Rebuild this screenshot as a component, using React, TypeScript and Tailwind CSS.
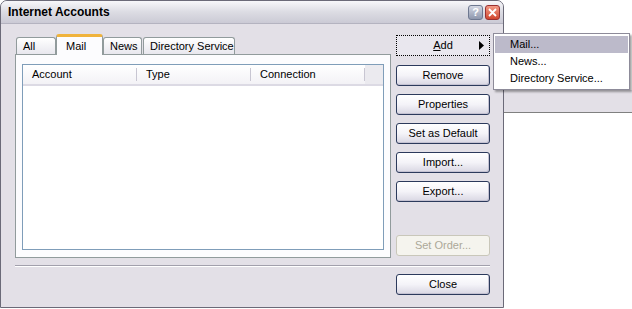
import React from 'react';

const FONT = "font-['Liberation_Sans',Arial,sans-serif]";

function XpButton({
  label,
  className = '',
  disabled = false,
}: {
  label: React.ReactNode;
  className?: string;
  disabled?: boolean;
}) {
  if (disabled) {
    return (
      <div
        className={`h-[21px] w-[94px] rounded-[3px] border border-[#c9c7ba] bg-[#f5f4ee] flex items-center justify-center text-[#aca899] ${className}`}
      >
        {label}
      </div>
    );
  }
  return (
    <div
      className={`h-[21px] w-[94px] rounded-[3px] border border-[#2c3a5c] bg-gradient-to-b from-white via-[#f4f3f8] to-[#d9d7e3] shadow-[inset_-1px_-1px_0_#c4c2d2] flex items-center justify-center text-black ${className}`}
    >
      {label}
    </div>
  );
}

function Tab({ label, active = false, width, className = '' }: { label: string; active?: boolean; width: number; className?: string }) {
  if (active) {
    return (
      <div
        className={`relative z-10 -mb-px h-[21px] rounded-t-[3px] border-x border-[#919b9c] bg-[#fcfcfe] border-t-[3px] border-t-[#f0b33c] flex items-start pt-[1px] pl-[9px] ${className}`}
        style={{ width }}
      >
        {label}
      </div>
    );
  }
  return (
    <div
      className={`h-[17px] rounded-t-[3px] border border-b-0 border-[#919b9c] bg-gradient-to-b from-white to-[#e8e7ee] flex items-center pl-[6px] ${className}`}
      style={{ width }}
    >
      {label}
    </div>
  );
}

export default function App() {
  return (
    <div className={`relative w-[632px] h-[309px] bg-white overflow-hidden text-[11px] ${FONT}`}>
      {/* window behind, peeking out on the right */}
      <div className="absolute left-[504px] top-[90px] w-[128px] h-[23px] bg-[#e3e0e7] border-b border-[#808080]" />

      {/* dialog */}
      <div className="relative w-[504px] h-[308px] rounded-t-[7px] border border-[#6b6a78] bg-[#e3e0e7] flex flex-col">
        <div className="h-[23px] rounded-t-[6px] bg-gradient-to-b from-[#f7f7fa] via-[#dcdce3] to-[#cbcad5] border-b border-[#b4b3c0] flex items-center pl-[7px] pr-[3px]">
          <span className="font-bold text-[12px] text-black">Internet Accounts</span>
          <div className="ml-auto flex gap-[2px]">
            <div className="w-[15px] h-[15px] rounded-[3px] border border-[#6e7890] bg-gradient-to-b from-[#d4d8e4] to-[#8e97ad] flex items-center justify-center text-white font-bold text-[11px] leading-none">
              ?
            </div>
            <div className="w-[15px] h-[15px] rounded-[3px] border border-[#9a3030] bg-gradient-to-b from-[#f29a86] to-[#d0442c] flex items-center justify-center">
              <svg width="9" height="9" viewBox="0 0 9 9">
                <path d="M1 1L8 8M8 1L1 8" stroke="white" strokeWidth="1.8" />
              </svg>
            </div>
          </div>
        </div>

        <div className="flex-1 pl-[14px] pr-[13px] pt-[10px] flex flex-col">
          <div className="flex gap-[5px]">
            {/* tab control */}
            <div className="w-[376px] flex flex-col">
              <div className="flex items-end h-[20px] pl-[1px]">
                <Tab label="All" width={40} />
                <Tab label="Mail" width={47} active />
                <Tab label="News" width={39} />
                <Tab label="Directory Service" width={92} className="ml-px" />
              </div>
              <div className="h-[204px] border border-[#919b9c] bg-[#fcfcfe] pl-[6px] pr-[6px] pt-[9px] pb-[7px]">
                <div className="h-full border border-[#7f9db9] bg-white">
                  <div className="flex h-[21px] bg-gradient-to-b from-white to-[#f3f2f6] border-b-[2px] border-[#dcdae4]">
                    {['Account', 'Type', 'Connection'].map((c) => (
                      <div key={c} className="w-[114px] flex items-center pl-[9px] relative">
                        {c}
                        <div className="absolute right-0 top-[3px] h-[13px] w-px bg-[#c8c6d2]" />
                      </div>
                    ))}
                    <div className="flex-1 bg-[#ebeaef]" />
                  </div>
                </div>
              </div>
            </div>

            {/* buttons */}
            <div className="flex flex-col">
              <div className="mt-px h-[21px] w-[94px] border border-dotted border-black bg-[#e9e7ee] relative flex items-center justify-center">
                <span>
                  <span className="underline">A</span>dd
                </span>
                <svg className="absolute right-[5px] top-[5px]" width="5" height="9" viewBox="0 0 5 9">
                  <path d="M0 0L5 4.5L0 9Z" fill="black" />
                </svg>
              </div>
              <XpButton label="Remove" className="mt-[9px]" />
              <XpButton label="Properties" className="mt-[8px]" />
              <XpButton label="Set as Default" className="mt-[8px]" />
              <XpButton label="Import..." className="mt-[8px]" />
              <XpButton label="Export..." className="mt-[8px]" />
              <XpButton label="Set Order..." className="mt-[33px]" disabled />
            </div>
          </div>

          <div className="mt-[7px] border-t border-[#a2a0ac] border-b border-b-white w-[475px]" />
          <div className="mt-[7px] flex justify-end pr-px w-[476px]">
            <XpButton label="Close" />
          </div>
        </div>
      </div>

      {/* Add submenu */}
      <div className="absolute left-[493px] top-[33px] w-[137px] h-[57px] border border-[#8d8b99] bg-white pt-[2px] shadow-[2px_2px_2px_rgba(0,0,0,0.35)]">
        <div className="mx-px h-[17px] bg-[#bcbaca] flex items-center pl-[15px]">Mail...</div>
        <div className="mx-px h-[17px] flex items-center pl-[15px]">News...</div>
        <div className="mx-px h-[17px] flex items-center pl-[15px]">Directory Service...</div>
      </div>
    </div>
  );
}
